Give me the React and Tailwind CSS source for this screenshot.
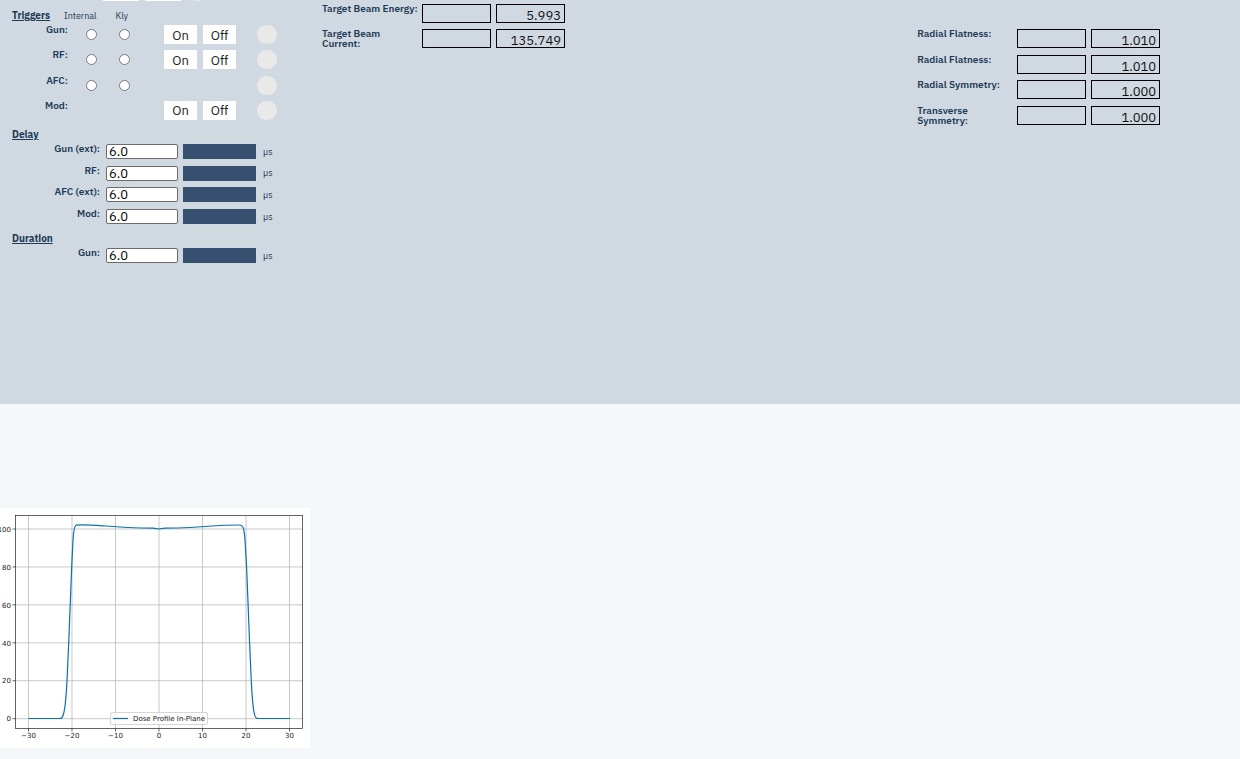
import { useState } from "react";

const triggers = [
  { name: "Gun", source: true, power: true },
  { name: "RF", source: true, power: true },
  { name: "AFC", source: true, power: false },
  { name: "Mod", source: false, power: true },
];

const targets = [
  { label: "Target Beam Energy:", value: "5.993" },
  { label: "Target Beam\nCurrent:", value: "135.749" },
];

const symmetry = [
  { label: "Radial Flatness:", value: "1.010" },
  { label: "Radial Flatness:", value: "1.010" },
  { label: "Radial Symmetry:", value: "1.000" },
  { label: "Transverse\nSymmetry:", value: "1.000" },
];

const xTicks = [-30, -20, -10, 0, 10, 20, 30];
const yTicks = [0, 20, 40, 60, 80, 100];

const profile =
  "M28.5 210.5H60C62 210.5 62.8 209 63.5 206C65 201 66 192 67 173L68.7 135L70.2 97L71.7 59L73 32C73.5 24 74 18 76 17.2C82 16.4 96 17.4 106 18C122 19.4 140 20 153 20.2L159 21L165 20.2C178 20 196 19.4 212 18C222 17.2 232 17 239 17C243 17 244 19 245 32L246.6 59L248.1 97L249.6 135L251.3 173C252.2 192 253.2 201 254.4 206C255 209 256 210.5 258 210.5H290";

function Heading({ children }) {
  return (
    <h2 className="text-[10px] leading-5 font-bold underline">{children}</h2>
  );
}

function TriggerRow({ name, source, power }) {
  return (
    <div className="flex h-[19px] items-center">
      <span className="w-14 self-start text-right text-[10px] leading-[10px] font-semibold">
        {name}:
      </span>
      <div className="ml-[18px] flex w-[78px] gap-[22px]">
        {source && (
          <>
            <input
              type="radio"
              name={name}
              aria-label={`${name} internal`}
              className="h-[11px] w-[11px]"
            />
            <input
              type="radio"
              name={name}
              aria-label={`${name} kly`}
              className="h-[11px] w-[11px]"
            />
          </>
        )}
      </div>
      <div className="flex w-[93px] gap-[6px]">
        {power && (
          <>
            <button className="h-[19px] w-[33px] bg-white pt-[2px] text-[13px] leading-4 text-[#222]">
              On
            </button>
            <button className="h-[19px] w-[33px] bg-white pt-[2px] text-[13px] leading-4 text-[#222]">
              Off
            </button>
          </>
        )}
      </div>
      <span className="h-[19px] w-5 rounded-full bg-[#e9e9e9]" />
    </div>
  );
}

function TimingRow({ id, label }) {
  const [value, setValue] = useState("6.0");

  return (
    <div className="flex h-[15px] items-center gap-[5px]">
      <label
        htmlFor={id}
        className="w-[89px] self-start pr-px text-right text-[10px] leading-[10px] font-semibold"
      >
        {label}
      </label>
      <input
        id={id}
        type="text"
        value={value}
        onChange={(e) => setValue(e.target.value)}
        className="h-[15px] w-[72px] rounded-xs border border-[#6b6b6b] bg-white px-[2px] text-[13px] leading-3 text-black"
      />
      <span className="h-[15px] w-[73px] bg-[#37506f]" />
      <span className="ml-[2px] text-[9px]">µs</span>
    </div>
  );
}

function Reading({ id, label, value }) {
  return (
    <div className="flex h-[19px] gap-[5px]">
      <label
        htmlFor={id}
        className="w-[95px] shrink-0 text-[10px] leading-[10px] font-semibold whitespace-pre"
      >
        {label}
      </label>
      <input
        id={id}
        type="text"
        className="h-[19px] w-[69px] border border-black px-[3px] text-[13px] text-black"
      />
      <output
        htmlFor={id}
        className="h-[19px] w-[69px] border border-black px-[3px] pt-[3px] text-right text-[13px] leading-4 text-[#111]"
      >
        {value}
      </output>
    </div>
  );
}

function DoseProfile() {
  return (
    <svg
      viewBox="0 0 310 240"
      className="block w-1/4 bg-white font-['DejaVu_Sans',sans-serif]"
      fontSize="7"
      fill="#222"
    >
      {xTicks.map((t) => {
        const x = 159 + t * 4.35;
        return (
          <g key={t}>
            <path d={`M${x} 7.5V220.5`} stroke="#b0b0b0" strokeWidth="0.7" />
            <path d={`M${x} 220.5v3`} stroke="#222" strokeWidth="0.7" />
            <text x={x} y="230" textAnchor="middle">
              {t < 0 ? `−${-t}` : t}
            </text>
          </g>
        );
      })}
      {yTicks.map((t) => {
        const y = 210.7 - t * 1.897;
        return (
          <g key={t}>
            <path d={`M15.5 ${y}H302.5`} stroke="#b0b0b0" strokeWidth="0.7" />
            <path d={`M12.5 ${y}h3`} stroke="#222" strokeWidth="0.7" />
            <text x="11" y={y + 2.7} textAnchor="end">
              {t}
            </text>
          </g>
        );
      })}
      <path d={profile} fill="none" stroke="#0a70b0" strokeWidth="1.2" />
      <rect
        x="15.5"
        y="7.5"
        width="287"
        height="213"
        fill="none"
        stroke="#222"
        strokeWidth="0.7"
      />
      <rect
        x="110.5"
        y="204.5"
        width="97"
        height="12"
        rx="1.5"
        fill="#fff"
        fillOpacity="0.8"
        stroke="#ccc"
        strokeWidth="0.8"
      />
      <path d="M113 210.5h15" stroke="#0a70b0" strokeWidth="1.2" />
      <text x="133" y="213">
        Dose Profile In-Plane
      </text>
    </svg>
  );
}

export default function App() {
  return (
    <div className="min-h-screen bg-[#f4f8fb] font-['IBM_Plex_Sans','Noto_Sans',sans-serif] text-[#1d3b56]">
      <main className="grid grid-cols-[25%_48%_27%] bg-[#d0d8e2] pb-[141px]">
        {/* Triggers and timing */}
        <section className="pl-3">
          <div className="flex h-px items-end gap-[6px] overflow-hidden pl-[91px]">
            <span className="h-5 w-9 shrink-0 bg-white" />
            <span className="h-5 w-9 shrink-0 bg-white" />
            <span className="h-5 w-5 shrink-0 rounded-full bg-[#e9e9e9]" />
          </div>
          <div className="flex h-6 items-center pt-[6px]">
            <Heading>Triggers</Heading>
            <span className="ml-[14px] text-[9px]">Internal</span>
            <span className="ml-[19px] text-[9px]">Kly</span>
          </div>
          <div className="flex h-[95px] flex-col justify-between">
            {triggers.map((t) => (
              <TriggerRow key={t.name} {...t} />
            ))}
          </div>
          <div className="flex h-6 items-center pt-[6px]">
            <Heading>Delay</Heading>
          </div>
          <div className="flex h-20 flex-col justify-between">
            <TimingRow id="delay-gun" label="Gun (ext):" />
            <TimingRow id="delay-rf" label="RF:" />
            <TimingRow id="delay-afc" label="AFC (ext):" />
            <TimingRow id="delay-mod" label="Mod:" />
          </div>
          <div className="flex h-6 items-center pt-[6px]">
            <Heading>Duration</Heading>
          </div>
          <TimingRow id="duration-gun" label="Gun:" />
        </section>

        {/* Beam targets */}
        <section className="flex flex-col gap-[6px] pt-1 pl-3">
          {targets.map((t, i) => (
            <Reading key={i} id={`target-${i}`} {...t} />
          ))}
        </section>

        {/* Flatness and symmetry */}
        <section className="pt-[29px] pl-3">
          <div className="flex h-24 flex-col justify-between">
            {symmetry.map((s, i) => (
              <Reading key={i} id={`symmetry-${i}`} {...s} />
            ))}
          </div>
        </section>
      </main>

      <div className="pt-[104px] pb-[11px]">
        <DoseProfile />
      </div>
    </div>
  );
}
